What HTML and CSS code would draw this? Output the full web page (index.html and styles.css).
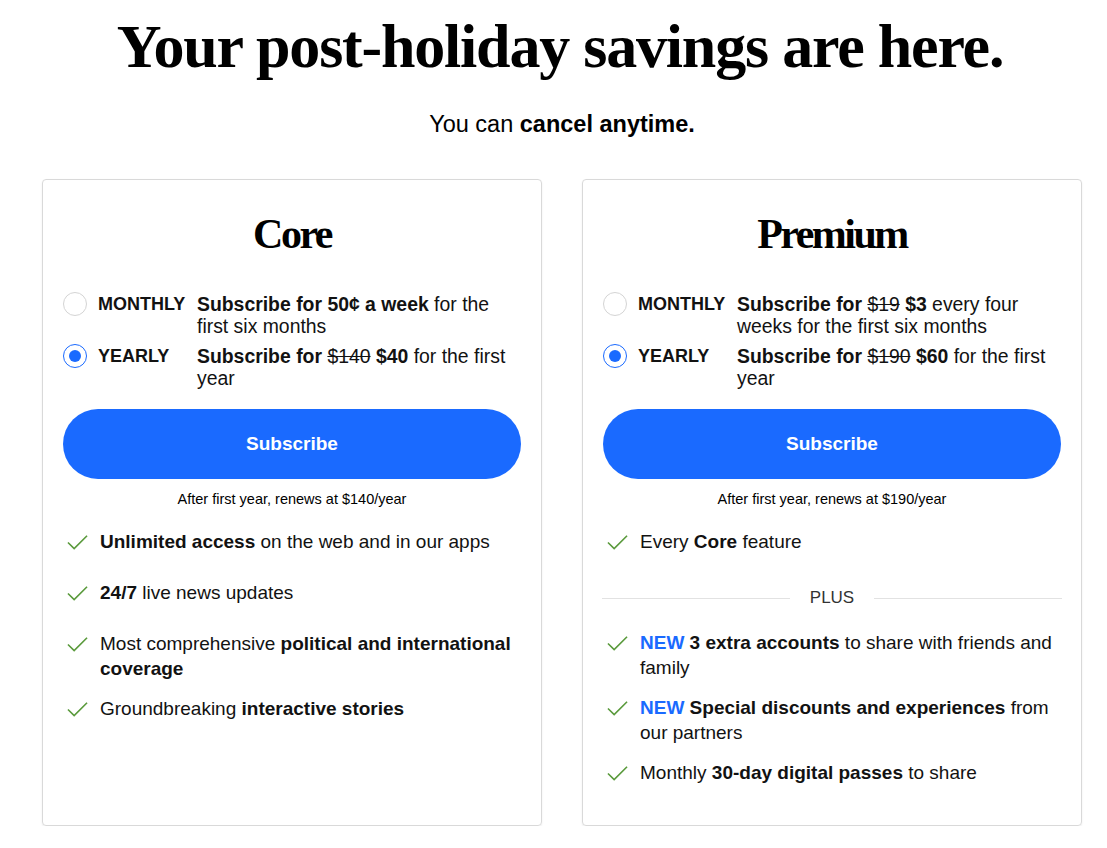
FILE: index.html
```html
<!DOCTYPE html>
<html lang="en">
<head>
<meta charset="utf-8">
<title>Subscribe</title>
<link rel="stylesheet" href="styles.css">
</head>
<body>
<main class="page">
  <header class="hero">
    <h1 class="hero-title">Your post-holiday savings are here.</h1>
    <p class="hero-sub">You can <b>cancel anytime.</b></p>
  </header>

  <section class="plans">
    <article class="plan">
      <h2 class="plan-name">Core</h2>
      <div class="options">
        <label class="option">
          <span class="radio"></span>
          <span class="term">MONTHLY</span>
          <span class="desc"><b>Subscribe for 50¢ a week</b> for the first six months</span>
        </label>
        <label class="option">
          <span class="radio radio-on"></span>
          <span class="term">YEARLY</span>
          <span class="desc"><b>Subscribe for <s>$140</s> $40</b> for the first year</span>
        </label>
      </div>
      <button class="subscribe" type="button">Subscribe</button>
      <p class="renew">After first year, renews at $140/year</p>
      <ul class="features">
        <li class="feature"><svg class="check" viewBox="0 0 22 16"><path d="M1 8.5 L7.5 15 L21 1.5"/></svg><span><b>Unlimited access</b> on the web and in our apps</span></li>
        <li class="feature"><svg class="check" viewBox="0 0 22 16"><path d="M1 8.5 L7.5 15 L21 1.5"/></svg><span><b>24/7</b> live news updates</span></li>
        <li class="feature"><svg class="check" viewBox="0 0 22 16"><path d="M1 8.5 L7.5 15 L21 1.5"/></svg><span>Most comprehensive <b>political and international coverage</b></span></li>
        <li class="feature"><svg class="check" viewBox="0 0 22 16"><path d="M1 8.5 L7.5 15 L21 1.5"/></svg><span>Groundbreaking <b>interactive stories</b></span></li>
      </ul>
    </article>

    <article class="plan">
      <h2 class="plan-name">Premium</h2>
      <div class="options">
        <label class="option">
          <span class="radio"></span>
          <span class="term">MONTHLY</span>
          <span class="desc"><b>Subscribe for <s>$19</s> $3</b> every four weeks for the first six months</span>
        </label>
        <label class="option">
          <span class="radio radio-on"></span>
          <span class="term">YEARLY</span>
          <span class="desc"><b>Subscribe for <s>$190</s> $60</b> for the first year</span>
        </label>
      </div>
      <button class="subscribe" type="button">Subscribe</button>
      <p class="renew">After first year, renews at $190/year</p>
      <ul class="features">
        <li class="feature"><svg class="check" viewBox="0 0 22 16"><path d="M1 8.5 L7.5 15 L21 1.5"/></svg><span>Every <b>Core</b> feature</span></li>
      </ul>
      <div class="plus"><span>PLUS</span></div>
      <ul class="features features-plus">
        <li class="feature"><svg class="check" viewBox="0 0 22 16"><path d="M1 8.5 L7.5 15 L21 1.5"/></svg><span><b class="new">NEW</b> <b>3 extra accounts</b> to share with friends and family</span></li>
        <li class="feature"><svg class="check" viewBox="0 0 22 16"><path d="M1 8.5 L7.5 15 L21 1.5"/></svg><span><b class="new">NEW</b> <b>Special discounts and experiences</b> from our partners</span></li>
        <li class="feature"><svg class="check" viewBox="0 0 22 16"><path d="M1 8.5 L7.5 15 L21 1.5"/></svg><span>Monthly <b>30-day digital passes</b> to share</span></li>
      </ul>
    </article>
  </section>
</main>
</body>
</html>
```

FILE: styles.css
```css
* { box-sizing: border-box; }

body {
  margin: 0;
  background: #fff;
  color: #121212;
  font-family: "Liberation Sans", Arial, sans-serif;
}

.page {
  width: 1040px;
  margin-left: 42px;
  padding-top: 10px;
}

.hero { text-align: center; }

.hero-title {
  margin: 0 4px 0 0;
  font-family: "Liberation Serif", "Times New Roman", serif;
  font-weight: 700;
  font-size: 62px;
  line-height: 72px;
  letter-spacing: -1.2px;
  color: #000;
}

.hero-sub {
  margin: 27px 0 0;
  font-family: "Liberation Sans", Arial, sans-serif;
  font-size: 23.5px;
  line-height: 30px;
  color: #000;
}

.plans {
  display: grid;
  grid-template-columns: 500px 500px;
  column-gap: 40px;
  margin-top: 40px;
}

.plan {
  border: 1px solid #d9d9d9;
  border-radius: 4px;
  box-shadow: 0 1px 2px rgba(0,0,0,0.08);
  padding: 26px 20px 0;
  min-height: 647px;
}

.plan-name {
  margin: 0;
  text-align: center;
  font-family: "Liberation Serif", "Times New Roman", serif;
  font-weight: 700;
  font-size: 42px;
  line-height: 56px;
  letter-spacing: -2.5px;
  color: #000;
}

.options {
  display: flex;
  flex-direction: column;
  gap: 8px;
  margin-top: 31px;
}

.option {
  display: grid;
  grid-template-columns: 24px 88px 1fr;
  column-gap: 11px;
  align-items: start;
  font-size: 19.4px;
  line-height: 22px;
}

.radio {
  width: 24px;
  height: 24px;
  border-radius: 50%;
  border: 1px solid #d4d4d4;
  display: flex;
  align-items: center;
  justify-content: center;
  margin-top: -1px;
}

.radio-on { border-color: #1a6aff; }
.radio-on::after {
  content: "";
  width: 12px;
  height: 12px;
  border-radius: 50%;
  background: #1a6aff;
}

.term {
  font-weight: 700;
  font-size: 18px;
  color: #121212;
}

.desc { color: #121212; }
.desc s { font-weight: 400; }

.subscribe {
  display: block;
  width: 100%;
  height: 70px;
  margin-top: 20px;
  border: 0;
  border-radius: 35px;
  background: #1a6aff;
  color: #fff;
  font-family: "Liberation Sans", Arial, sans-serif;
  font-weight: 700;
  font-size: 19px;
}

.renew {
  margin: 11px 0 0;
  text-align: center;
  font-family: "Liberation Sans", Arial, sans-serif;
  font-size: 14.5px;
  line-height: 18px;
  color: #000;
}

.features {
  list-style: none;
  margin: 21px 0 0;
  padding: 0;
}

.feature {
  display: flex;
  align-items: flex-start;
  gap: 12px;
  min-height: 36px;
  margin-bottom: 15px;
  padding-left: 4px;
  font-size: 19px;
  line-height: 25px;
  color: #121212;
}

.check {
  flex: none;
  width: 21px;
  height: 16px;
  margin-top: 5px;
  fill: none;
  stroke: #5a9a3c;
  stroke-width: 1.7;
}

.new { color: #1a6aff; }

.plus {
  display: flex;
  align-items: center;
  gap: 20px;
  margin: 22px -1px 21px;
  font-family: "Liberation Sans", Arial, sans-serif;
  font-size: 17px;
  line-height: 22px;
  color: #333;
}

.plus::before,
.plus::after {
  content: "";
  flex: 1;
  height: 1px;
  background: #e2e2e2;
}

.features-plus { margin-top: 0; }
```
